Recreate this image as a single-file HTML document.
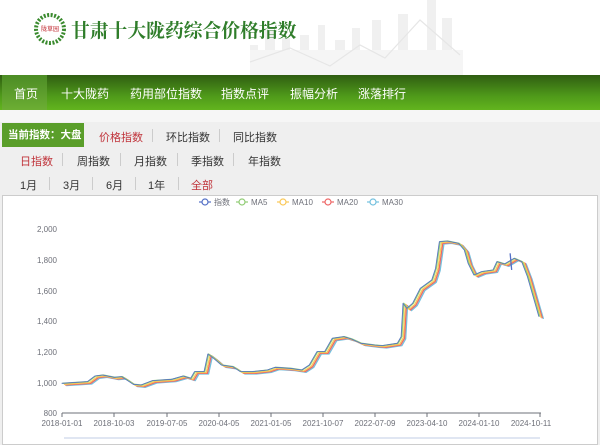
<!DOCTYPE html>
<html><head><meta charset="utf-8"><style>
*{margin:0;padding:0;box-sizing:border-box}
body{width:600px;height:439px;overflow:hidden;background:#efefef;font-family:"Liberation Sans","Noto Sans CJK SC",sans-serif;font-size:11px;color:#333;position:relative}
.hdr{position:absolute;left:0;top:0;width:600px;height:75px;background:#fff}
.title{position:absolute;left:71px;top:16px;font:bold 18.8px "Noto Serif CJK SC",serif;color:#2f7d2a;white-space:nowrap;letter-spacing:0}
.nav{position:absolute;left:0;top:75px;width:600px;height:35px;background:linear-gradient(#2f5d12,#4f9a1a 60%,#62b41e)}
.nav span{position:absolute;top:10px;color:#fff;font-size:12px}
.nav .act{position:absolute;left:2px;top:0;width:45px;height:35px;background:linear-gradient(#4c8c25,#6cae33)}
.band{position:absolute;left:0;top:110px;width:600px;height:12px;background:#f6f6f6}
.row span{position:absolute;font-size:11px;color:#333}
.red{color:#c0343b!important}
.sep{position:absolute;width:1px;height:13px;background:#ccc}
.cur{position:absolute;left:2px;top:123px;width:82px;height:24px;background:#5a9e2a;color:#fff;font-weight:bold;font-size:10.5px;line-height:24px;padding-left:6px}
.panel{position:absolute;left:2px;top:195px;width:596px;height:250px;background:#fff;border:1px solid #ccc}
</style></head><body>
<div class="hdr">
<svg width="600" height="75" style="position:absolute;left:0;top:0">
<g fill="#f0f0f0">
<rect x="250" y="45" width="8" height="30"/><rect x="265" y="30" width="10" height="45"/><rect x="282" y="38" width="8" height="37"/><rect x="300" y="35" width="9" height="40"/><rect x="318" y="25" width="7" height="50"/><rect x="335" y="40" width="10" height="35"/><rect x="352" y="28" width="8" height="47"/><rect x="372" y="20" width="9" height="55"/><rect x="398" y="14" width="10" height="61"/><rect x="427" y="0" width="9" height="75"/><rect x="442" y="18" width="10" height="57"/><rect x="250" y="50" width="213" height="25" fill="#f5f5f5"/>
</g>
<polyline points="250,62 290,48 330,66 360,45 385,58 420,20 460,55" fill="none" stroke="#e6e6e6" stroke-width="1.2"/>
<circle cx="50" cy="29" r="14" fill="none" stroke="#3a8a2e" stroke-width="4" stroke-dasharray="2 1.5"/>
<circle cx="50" cy="29" r="10" fill="#fff"/>
<text x="50" y="31" font-size="6" fill="#c0282e" text-anchor="middle" font-family="Noto Sans CJK SC">陇草园</text>
</svg>
<div class="title">甘肃十大陇药综合价格指数</div>
</div>
<div class="nav"><div class="act"></div>
<span style="left:14px">首页</span><span style="left:61px">十大陇药</span><span style="left:130px">药用部位指数</span><span style="left:221px">指数点评</span><span style="left:290px">振幅分析</span><span style="left:358px">涨落排行</span></div>
<div class="band"></div>
<div class="cur">当前指数：大盘</div>
<div class="row">
<span class="red" style="left:99px;top:129px">价格指数</span><div class="sep" style="left:152px;top:129px"></div>
<span style="left:166px;top:129px">环比指数</span><div class="sep" style="left:219px;top:129px"></div>
<span style="left:233px;top:129px">同比指数</span>
<span class="red" style="left:20px;top:153px">日指数</span><div class="sep" style="left:62px;top:153px"></div>
<span style="left:77px;top:153px">周指数</span><div class="sep" style="left:120px;top:153px"></div>
<span style="left:134px;top:153px">月指数</span><div class="sep" style="left:177px;top:153px"></div>
<span style="left:191px;top:153px">季指数</span><div class="sep" style="left:233px;top:153px"></div>
<span style="left:248px;top:153px">年指数</span>
<span style="left:20px;top:177px">1月</span><div class="sep" style="left:49px;top:177px"></div>
<span style="left:63px;top:177px">3月</span><div class="sep" style="left:92px;top:177px"></div>
<span style="left:106px;top:177px">6月</span><div class="sep" style="left:135px;top:177px"></div>
<span style="left:148px;top:177px">1年</span><div class="sep" style="left:178px;top:177px"></div>
<span class="red" style="left:191px;top:177px">全部</span>
</div>
<div class="panel"></div>
<svg width="600" height="439" style="position:absolute;left:0;top:0" font-family="Liberation Sans" font-size="8" fill="#6e7079">
<g stroke-width="1.2" fill="none">
<line x1="199" y1="202" x2="211" y2="202" stroke="#5470c6"/><circle cx="205" cy="202" r="3" stroke="#5470c6" fill="#fff"/>
<line x1="236" y1="202" x2="248" y2="202" stroke="#91cc75"/><circle cx="242" cy="202" r="3" stroke="#91cc75" fill="#fff"/>
<line x1="277" y1="202" x2="289" y2="202" stroke="#fac858"/><circle cx="283" cy="202" r="3" stroke="#fac858" fill="#fff"/>
<line x1="322" y1="202" x2="334" y2="202" stroke="#ee6666"/><circle cx="328" cy="202" r="3" stroke="#ee6666" fill="#fff"/>
<line x1="367" y1="202" x2="379" y2="202" stroke="#73c0de"/><circle cx="373" cy="202" r="3" stroke="#73c0de" fill="#fff"/>
</g>
<text x="214" y="205">指数</text><text x="251" y="205">MA5</text><text x="292" y="205">MA10</text><text x="337" y="205">MA20</text><text x="382" y="205">MA30</text>
<g text-anchor="end"><text x="57" y="232">2,000</text><text x="57" y="263">1,800</text><text x="57" y="294">1,600</text><text x="57" y="324">1,400</text><text x="57" y="355">1,200</text><text x="57" y="386">1,000</text><text x="57" y="416">800</text></g>
<line x1="62" y1="413" x2="541" y2="413" stroke="#6e7079"/>
<g stroke="#6e7079"><line x1="62" y1="413" x2="62" y2="417"/><line x1="114" y1="413" x2="114" y2="417"/><line x1="167" y1="413" x2="167" y2="417"/><line x1="219" y1="413" x2="219" y2="417"/><line x1="271" y1="413" x2="271" y2="417"/><line x1="323" y1="413" x2="323" y2="417"/><line x1="375" y1="413" x2="375" y2="417"/><line x1="427" y1="413" x2="427" y2="417"/><line x1="479" y1="413" x2="479" y2="417"/><line x1="540" y1="413" x2="540" y2="417"/></g>
<g text-anchor="middle"><text x="62" y="426">2018-01-01</text><text x="114" y="426">2018-10-03</text><text x="167" y="426">2019-07-05</text><text x="219" y="426">2020-04-05</text><text x="271" y="426">2021-01-05</text><text x="323" y="426">2021-10-07</text><text x="375" y="426">2022-07-09</text><text x="427" y="426">2023-04-10</text><text x="479" y="426">2024-01-10</text><text x="531" y="426">2024-10-11</text></g>
<defs><path id="p" vector-effect="non-scaling-stroke" d="M163,580 L230,575 L250,558 L270,555 L300,562 L320,560 L350,583 L370,585 L400,572 L450,568 L480,558 L500,565 L510,545 L535,545 L545,492 L560,505 L580,525 L610,530 L630,545 L660,545 L700,540 L720,532 L760,535 L790,540 L810,525 L830,485 L850,485 L870,445 L900,440 L920,447 L945,460 L980,465 L1000,467 L1040,460 L1050,440 L1055,340 L1065,355 L1080,340 L1100,295 L1130,270 L1140,235 L1150,155 L1170,153 L1200,160 L1215,180 L1225,220 L1240,255 L1260,245 L1290,240 L1300,215 L1320,222 L1345,205 L1365,215 L1380,260 L1400,340 L1410,380"/></defs>
<g transform="translate(0,190) scale(0.3827,0.3333)" fill="none" stroke-linejoin="round" stroke-width="1.3">
<use href="#p" transform="translate(10,7)" stroke="#73c0de"/>
<use href="#p" transform="translate(7,5)" stroke="#ee6666"/>
<use href="#p" transform="translate(4,3)" stroke="#fac858"/>
<use href="#p" stroke="#91cc75"/>
<use href="#p" transform="translate(-2,0)" stroke="#5470c6" stroke-width="0.8"/>
<line x1="1333" y1="190" x2="1337" y2="240" stroke="#5470c6" vector-effect="non-scaling-stroke" stroke-width="1.3"/>
</g>
<rect x="64" y="437" width="476" height="4" fill="#e0e6f2"/>
</svg>
</body></html>
